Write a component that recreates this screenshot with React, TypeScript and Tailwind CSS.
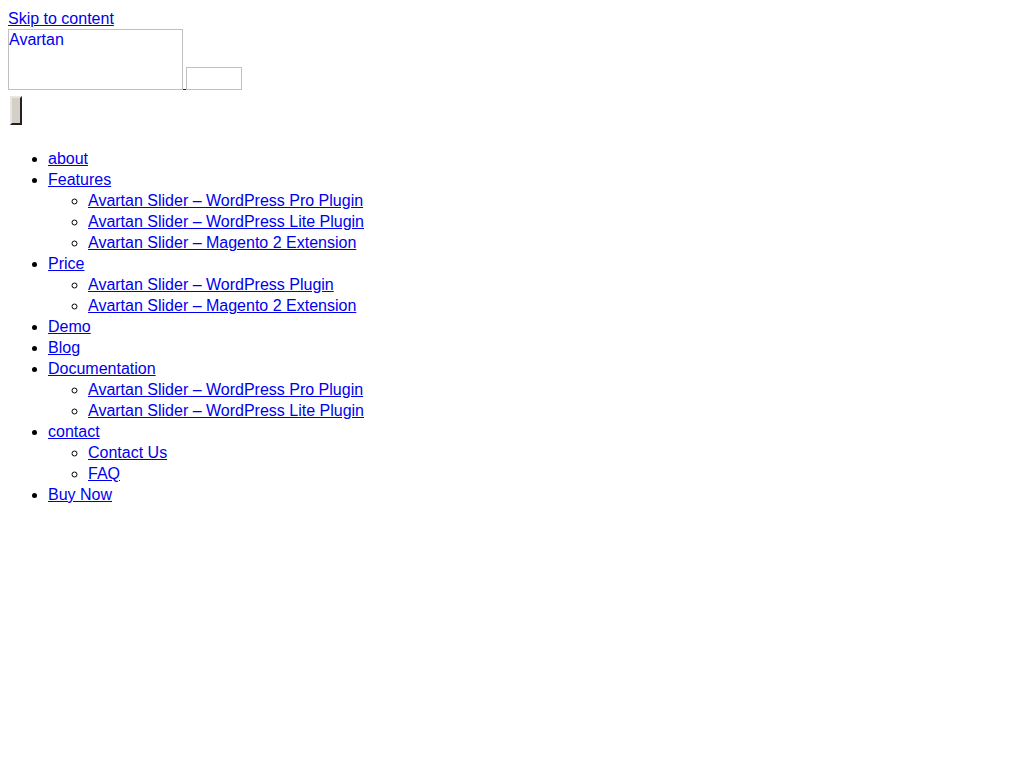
import React from 'react';

type Item = { label: string; children?: string[] };

const menu: Item[] = [
  { label: 'about' },
  {
    label: 'Features',
    children: [
      'Avartan Slider – WordPress Pro Plugin',
      'Avartan Slider – WordPress Lite Plugin',
      'Avartan Slider – Magento 2 Extension',
    ],
  },
  {
    label: 'Price',
    children: ['Avartan Slider – WordPress Plugin', 'Avartan Slider – Magento 2 Extension'],
  },
  { label: 'Demo' },
  { label: 'Blog' },
  {
    label: 'Documentation ',
    children: ['Avartan Slider – WordPress Pro Plugin', 'Avartan Slider – WordPress Lite Plugin'],
  },
  { label: 'contact', children: ['Contact Us', 'FAQ'] },
  { label: 'Buy Now' },
];

const linkCls = 'text-[#0000ee] underline';

const App: React.FC = () => {
  return (
    <div className="min-h-[768px] bg-white px-2 pt-2 text-[16px] leading-[21px] text-black [font-family:'Liberation_Sans',Arial,sans-serif]">
      <div className="h-[21px]">
        <a href="#content" className={linkCls}>Skip to content</a>
      </div>

      <div className="flex h-[66px] items-start">
        <a href="#" className="flex items-start">
          <span className="block h-[61px] w-[175px] border border-[#c0c0c0] text-[#0000ee] leading-[19px]">
            Avartan
          </span>
          <span className="mt-[60px] block h-px w-[3px] bg-[#0000ee]" />
        </a>
        <span className="mt-[38px] block h-[23px] w-[56px] border border-[#c0c0c0]" />
      </div>

      <div className="h-[37px]">
        <button
          type="button"
          className="ml-[2px] mt-px block h-[29px] w-[12px] border-2 border-t-[#e8e6e2] border-l-[#e8e6e2] border-r-[#222] border-b-[#222] bg-[#d4d0c8]"
        />
      </div>

      <ul className="mt-[15px] list-disc pl-10">
        {menu.map((item) => (
          <li key={item.label}>
            <a href="#" className={linkCls}>{item.label}</a>
            {item.children && (
              <ul className="list-[circle] pl-10">
                {item.children.map((c) => (
                  <li key={c}>
                    <a href="#" className={linkCls}>{c}</a>
                  </li>
                ))}
              </ul>
            )}
          </li>
        ))}
      </ul>
    </div>
  );
};

export default App;
